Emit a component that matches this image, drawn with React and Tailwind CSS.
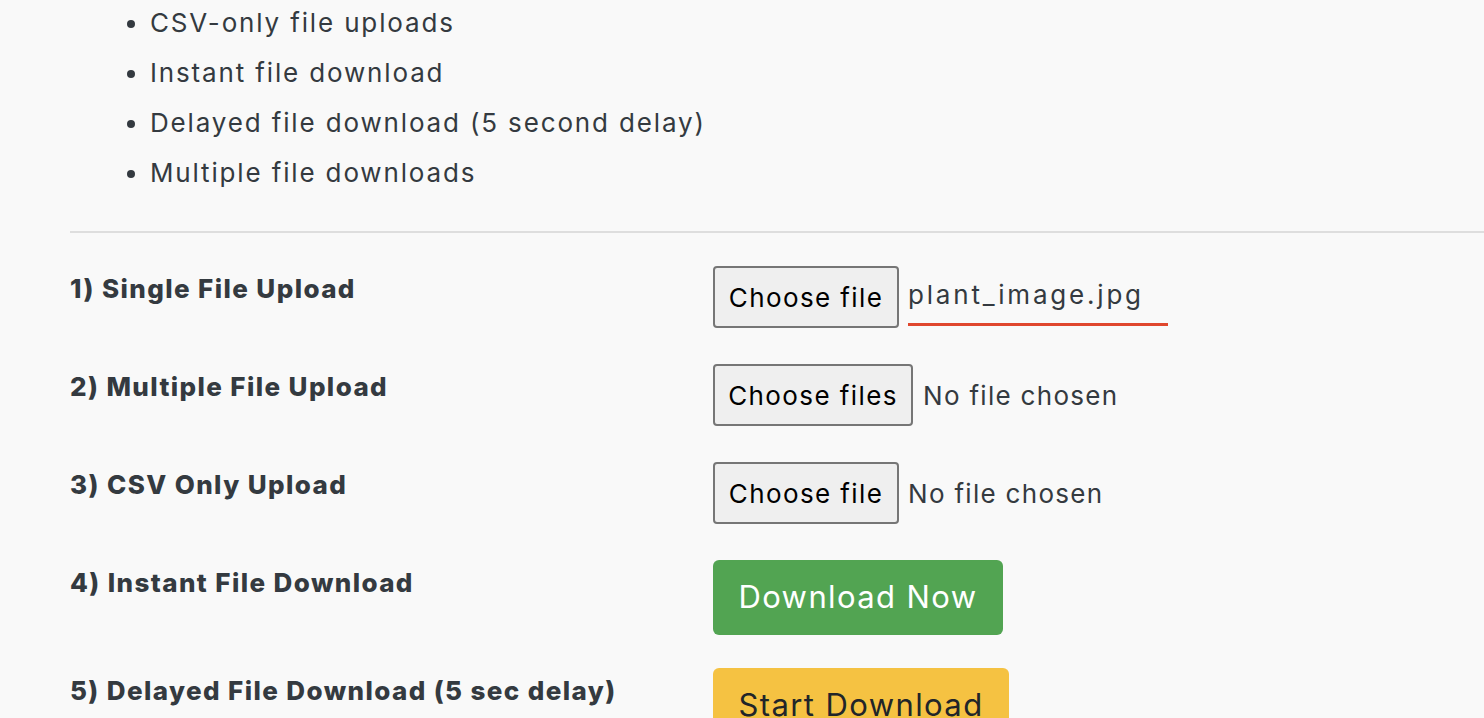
export default function App() {
  const bullets = [
    "CSV-only file uploads",
    "Instant file download",
    "Delayed file download (5 second delay)",
    "Multiple file downloads",
  ];
  const font = { fontFamily: "Inter, sans-serif" };
  const label = "w-[643px] -mt-[2px] text-[26px] font-extrabold tracking-[1.4px] leading-[50px]";
  return (
    <div className="w-[1484px] h-[718px] overflow-hidden bg-[#f9f9f9] text-[#343a40]" style={font}>
      <ul className="pl-[150px] pt-0 list-disc text-[26px] leading-[50px] tracking-[1.85px] -mt-[2px]">
        {bullets.map((b) => (
          <li key={b}>{b}</li>
        ))}
      </ul>
      <div className="ml-[70px] mt-[33px] border-t-2 border-[#dedede]" />
      <div className="pl-[70px] pt-[33px] flex flex-col">
        <div className="flex h-[98px]">
          <div className={label}>1) Single File Upload</div>
          <div className="flex items-start">
            <span className="h-[62px] w-[186px] border-2 border-[#767676] rounded-[4px] bg-[#efefef] text-black text-[26px] tracking-[1.4px] flex items-center justify-center">Choose file</span>
            <span className="ml-[9px] h-[60px] w-[260px] border-b-[3px] border-[#e0472e] text-[26px] tracking-[2.8px] flex items-center">plant_image.jpg</span>
          </div>
        </div>
        <div className="flex h-[98px]">
          <div className={label}>2) Multiple File Upload</div>
          <div className="flex items-start">
            <span className="h-[62px] w-[200px] border-2 border-[#767676] rounded-[4px] bg-[#efefef] text-black text-[26px] tracking-[1.4px] flex items-center justify-center">Choose files</span>
            <span className="ml-[10px] h-[62px] text-[26px] tracking-[1.3px] flex items-center">No file chosen</span>
          </div>
        </div>
        <div className="flex h-[98px]">
          <div className={label}>3) CSV Only Upload</div>
          <div className="flex items-start">
            <span className="h-[62px] w-[186px] border-2 border-[#767676] rounded-[4px] bg-[#efefef] text-black text-[26px] tracking-[1.4px] flex items-center justify-center">Choose file</span>
            <span className="ml-[9px] h-[62px] text-[26px] tracking-[1.3px] flex items-center">No file chosen</span>
          </div>
        </div>
        <div className="flex h-[108px]">
          <div className={label}>4) Instant File Download</div>
          <div className="flex items-start">
            <span className="h-[75px] w-[290px] rounded-[6px] bg-[#52a452] text-white text-[31px] tracking-[1.4px] flex items-center justify-center">Download Now</span>
          </div>
        </div>
        <div className="flex h-[108px]">
          <div className={label}>5) Delayed File Download (5 sec delay)</div>
          <div className="flex items-start">
            <span className="h-[75px] w-[296px] rounded-[6px] bg-[#f5c242] text-[#212529] text-[31px] tracking-[1.4px] flex items-center justify-center">Start Download</span>
          </div>
        </div>
      </div>
    </div>
  );
}
